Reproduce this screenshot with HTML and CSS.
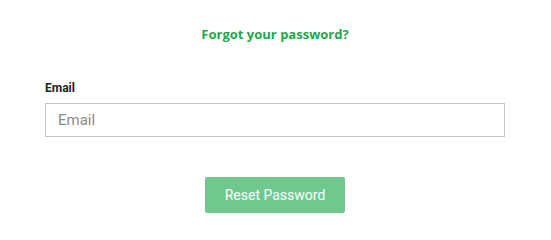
FILE: index.html
```html
<!DOCTYPE html>
<html>
<head>
<meta charset="utf-8">
<link rel="stylesheet" href="styles.css">
</head>
<body>
<div class="page">
  <h1 class="title">Forgot your password?</h1>
  <form class="form">
    <label class="label" for="email">Email</label>
    <input class="input" id="email" type="text" placeholder="Email">
    <div class="actions">
      <button class="btn" type="button">Reset Password</button>
    </div>
  </form>
</div>
</body>
</html>
```
FILE: styles.css
```css
html, body { margin: 0; padding: 0; background: #fff; }
.page {
  width: 551px;
  padding: 0 46px 0 45px;
  box-sizing: border-box;
  font-family: Roboto, "Liberation Sans", sans-serif;
}
.title {
  margin: 0;
  padding-top: 26px;
  height: 16px;
  line-height: 16px;
  text-align: center;
  font-family: "Open Sans", sans-serif;
  font-weight: 700;
  font-size: 13px;
  color: #1ea84b;
}
.form {
  display: flex;
  flex-direction: column;
  margin-top: 39px;
}
.label {
  font-size: 12px;
  font-weight: 700;
  color: #222;
  line-height: 14px;
  height: 14px;
  margin-bottom: 8px;
}
.input {
  height: 34px;
  box-sizing: border-box;
  border: 1px solid #c4c4c4;
  border-radius: 0;
  padding: 0 12px;
  font-family: Roboto, "Liberation Sans", sans-serif;
  font-size: 15px;
  color: #333;
  outline: none;
}
.input::placeholder { color: #8a8a8a; }
.actions {
  display: flex;
  justify-content: center;
  margin-top: 40px;
}
.btn {
  width: 140px;
  height: 36px;
  border: none;
  border-radius: 2px;
  background: #6fc98f;
  color: #fff;
  font-family: Roboto, "Liberation Sans", sans-serif;
  font-size: 14px;
  padding: 0;
}
```
